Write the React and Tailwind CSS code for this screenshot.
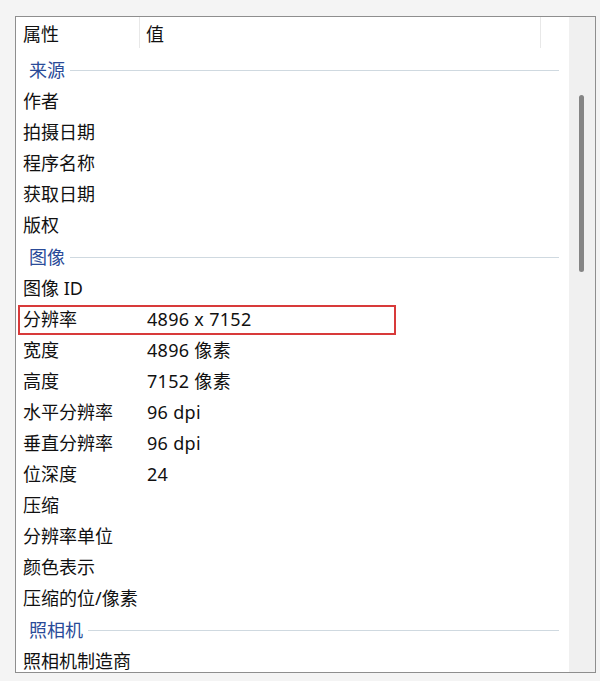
import React from "react";

const rows = [
  { g: "来源" },
  { k: "作者" },
  { k: "拍摄日期" },
  { k: "程序名称" },
  { k: "获取日期" },
  { k: "版权" },
  { g: "图像" },
  { k: "图像 ID" },
  { k: "分辨率", v: "4896 x 7152", hl: true },
  { k: "宽度", v: "4896 像素" },
  { k: "高度", v: "7152 像素" },
  { k: "水平分辨率", v: "96 dpi" },
  { k: "垂直分辨率", v: "96 dpi" },
  { k: "位深度", v: "24" },
  { k: "压缩" },
  { k: "分辨率单位" },
  { k: "颜色表示" },
  { k: "压缩的位/像素" },
  { g: "照相机" },
  { k: "照相机制造商" },
];

export default function App() {
  return (
    <div
      className="w-[600px] h-[681px] bg-[#f4f4f4] pt-[16px] pl-[15px] overflow-hidden"
      style={{ fontFamily: '"Noto Sans", "Noto Sans CJK SC", sans-serif' }}
    >
      <div className="w-[581px] h-[657px] border border-[#8e8e8e] bg-white flex overflow-hidden">
        <div className="w-[553px] flex flex-col overflow-hidden">
          <div className="h-[32px] flex shrink-0 text-[18px] text-[#111]">
            <div className="w-[124px] pl-[7px] pt-[3px] flex items-center border-r border-[#e8e8e8] h-[31px]">属性</div>
            <div className="w-[401px] pl-[6px] pt-[3px] flex items-center border-r border-[#e8e8e8] h-[31px]">值</div>
          </div>
          <div className="pt-[5px] flex flex-col">
            {rows.map((r, i) =>
              r.g ? (
                <div key={i} className="h-[32px] shrink-0 flex items-center pl-[13px] pr-[10px]">
                  <span className="text-[18px] text-[#2a4b98] leading-none">{r.g}</span>
                  <div className="flex-1 ml-[5px] h-px bg-[#cfd9e0]"></div>
                </div>
              ) : (
                <div key={i} className="relative h-[31px] shrink-0 flex items-center text-[18px] text-[#111]">
                  <div className="w-[124px] pl-[7px] whitespace-nowrap">{r.k}</div>
                  <div className="pl-[7px] whitespace-nowrap tracking-[0.3px]">{r.v || ""}</div>
                  {r.hl && (
                    <div className="absolute left-[2px] top-[1px] w-[378px] h-[30px] border-2 border-[#d83a3a]"></div>
                  )}
                </div>
              )
            )}
          </div>
        </div>
        <div className="w-[26px] bg-[#f0f0f0] shrink-0 pt-[78px] pl-[10px]">
          <div className="w-[5px] h-[177px] rounded-full bg-[#858585]"></div>
        </div>
      </div>
    </div>
  );
}
